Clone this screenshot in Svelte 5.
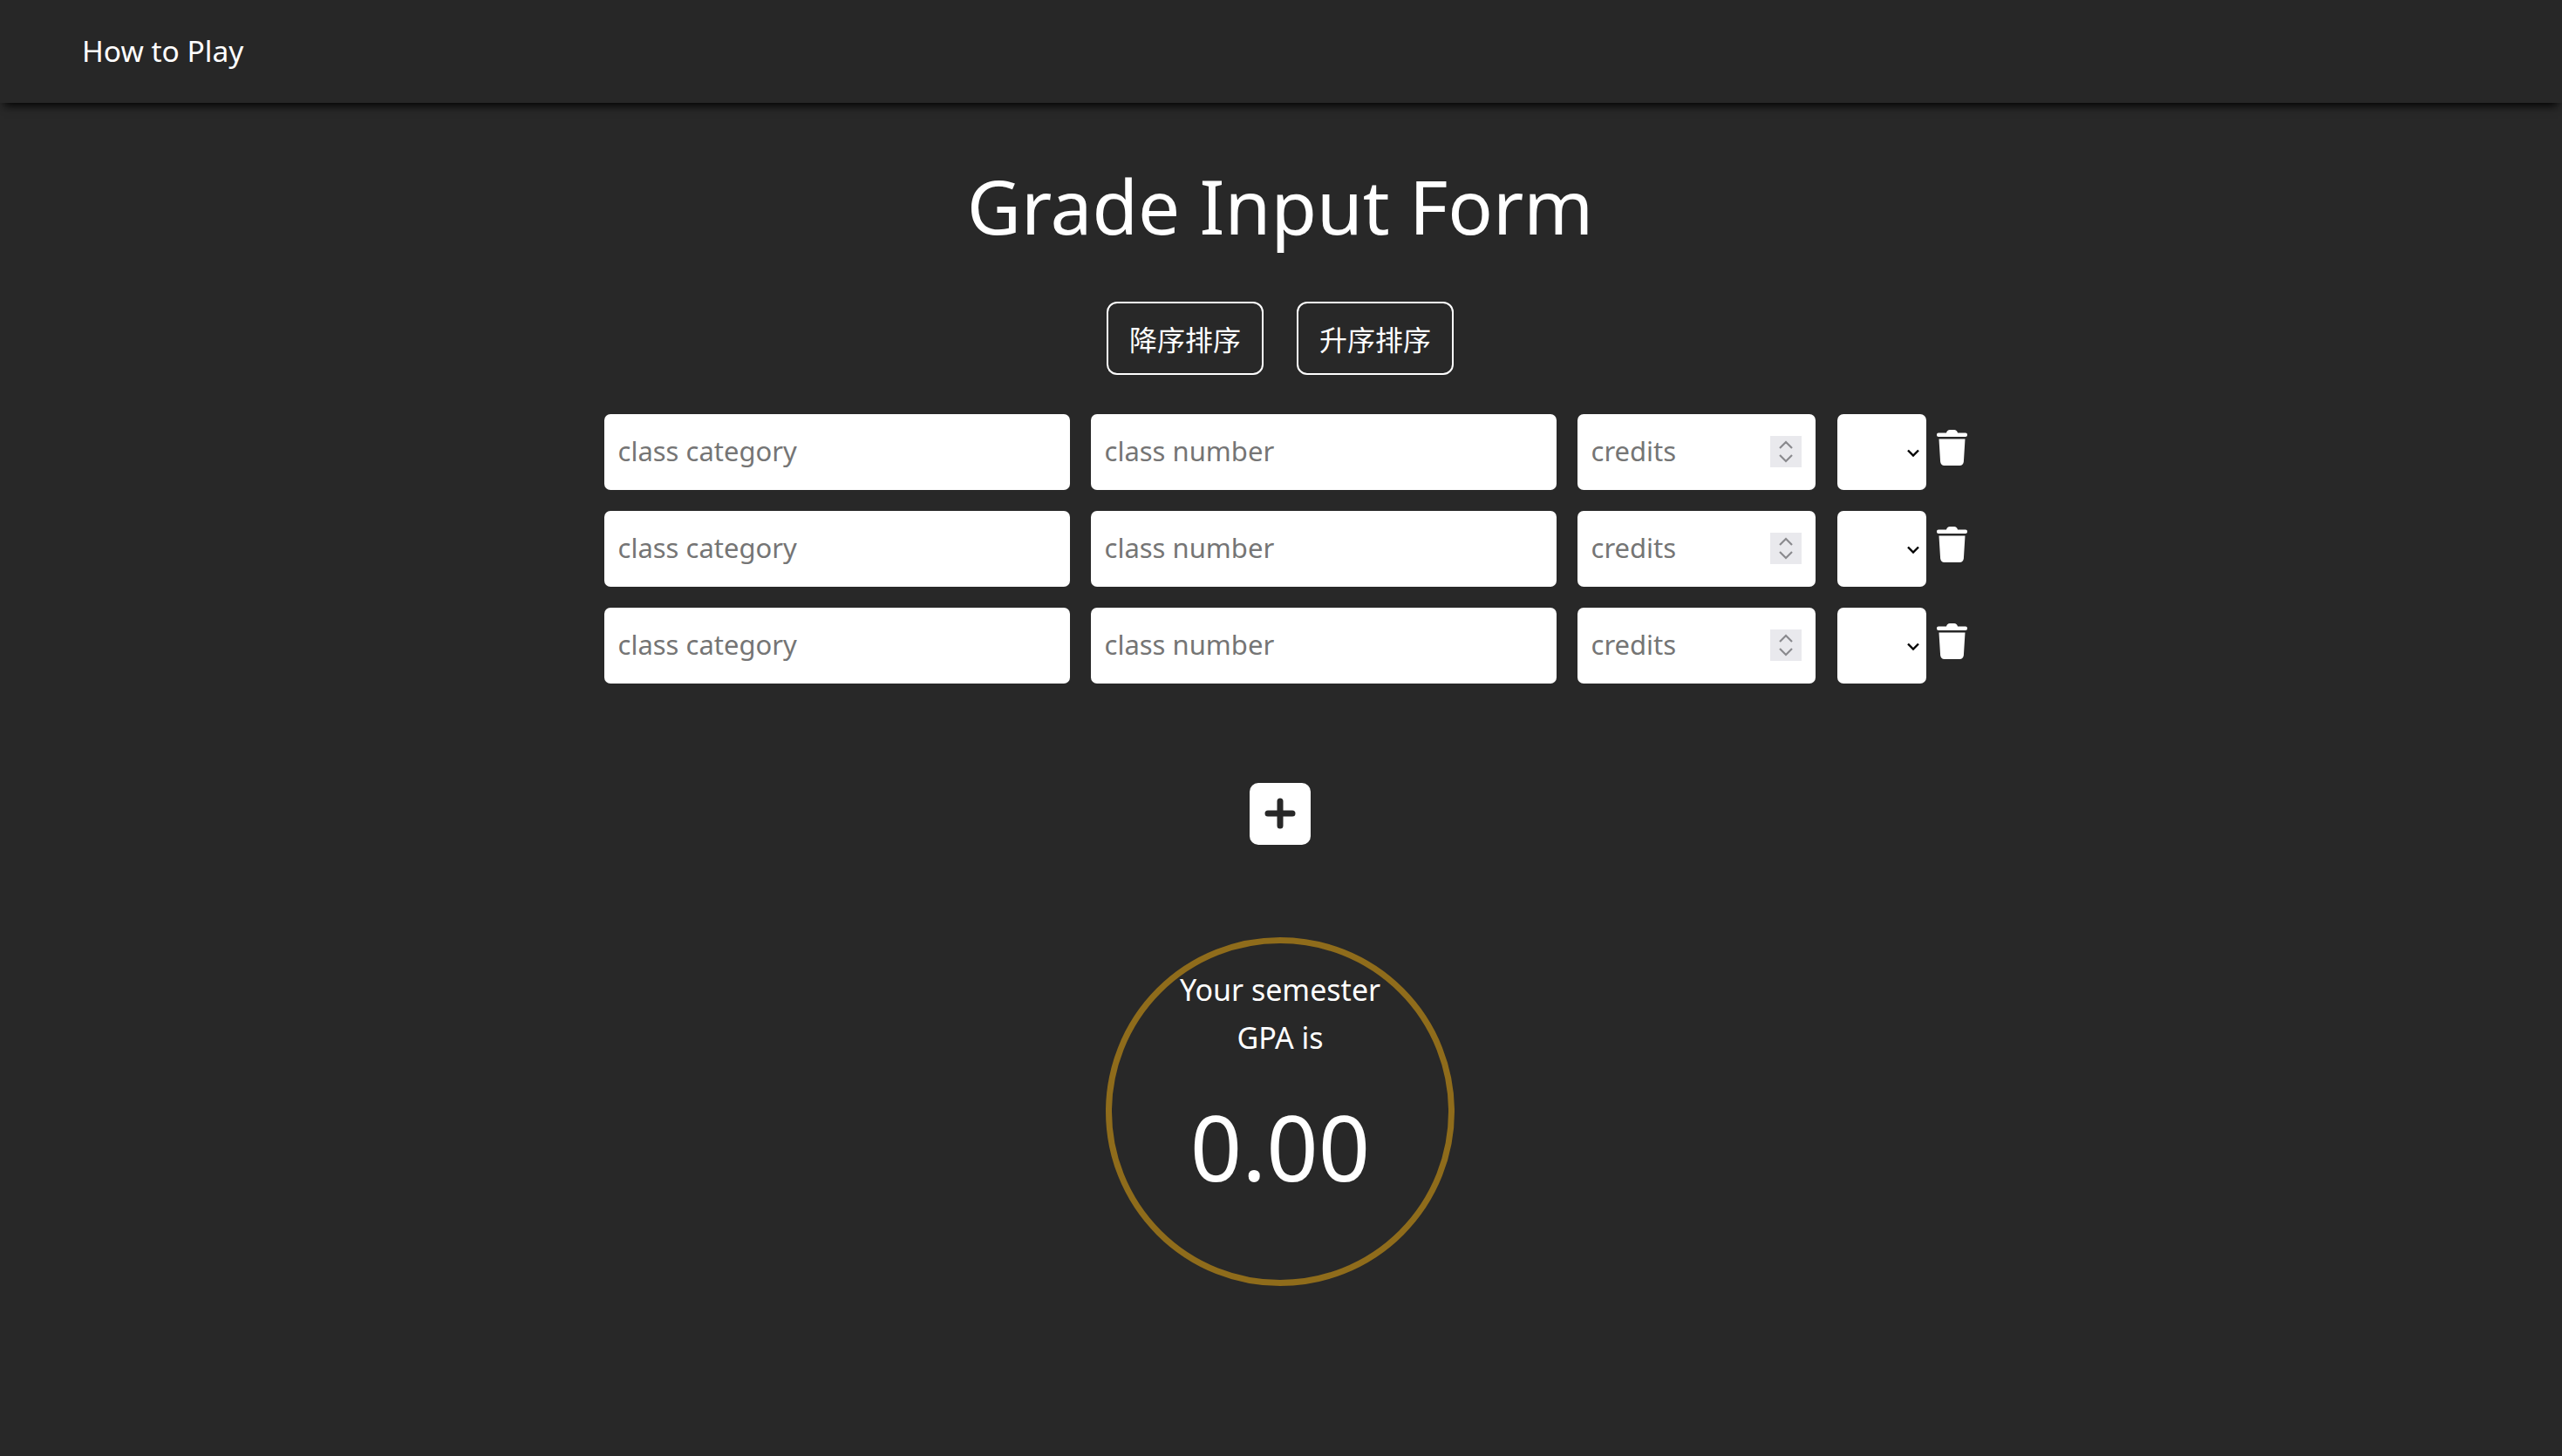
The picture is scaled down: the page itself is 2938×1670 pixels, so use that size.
<script lang="ts">
	const rows = [0, 1, 2];
</script>

<nav class="topbar">
	<a class="nav-link" href="#how">How to Play</a>
</nav>

<main class="page">
	<h1>Grade Input Form</h1>
	<div class="sort-btns">
		<button class="sort-btn">降序排序</button>
		<button class="sort-btn">升序排序</button>
	</div>

	<div class="rows">
		{#each rows as row (row)}
			<div class="row">
				<input class="field cat" placeholder="class category" />
				<input class="field num" placeholder="class number" />
				<div class="field credits">
					<span class="ph">credits</span>
					<span class="spinner">
						<svg viewBox="0 0 36 36" width="36" height="36">
							<path d="M11 14 18 7l7 7M11 22l7 7 7-7" fill="none" stroke="#8a8a8e" stroke-width="2.2" />
						</svg>
					</span>
				</div>
				<div class="field grade">
					<svg viewBox="0 0 14 9" width="14" height="9">
						<path d="M1 1.500 7 7.500l6-6" fill="none" stroke="#000" stroke-width="2.400" />
					</svg>
				</div>
				<button class="trash" aria-label="delete">
					<svg viewBox="0 0 35 41" width="35" height="41">
						<path fill="#fff" d="M11 3.500C11.500 1.500 13 0 15 0h5c2 0 3.500 1.500 4 3.500h9c1.200 0 2 .9 2 2.200s-.8 2.300-2 2.300H2C.8 8 0 7 0 5.700s.8-2.200 2-2.200zM2.500 10.500h30l-1.600 26c-.2 2.600-2 4.500-4.600 4.500H8.700c-2.600 0-4.400-1.900-4.600-4.500z" />
					</svg>
				</button>
			</div>
		{/each}
	</div>

	<button class="add" aria-label="add">
		<svg viewBox="0 0 36 36" width="36" height="36">
			<path d="M18 4v28M4 18h28" stroke="#282828" stroke-width="7" stroke-linecap="round" />
		</svg>
	</button>

	<div class="gpa">
		<p class="gpa-label">Your semester GPA is</p>
		<p class="gpa-value">0.00</p>
	</div>
</main>

<style>
	:global(body) {
		margin: 0;
		background: #282828;
		font-family: "Noto Sans", "Noto Sans CJK SC", sans-serif;
		color: #fff;
	}

	.topbar {
		box-sizing: border-box;
		height: 118px;
		display: flex;
		align-items: center;
		padding: 0 0 3px 94px;
		background: #272727;
		box-shadow: 0 8px 10px -5px #000;
	}

	.nav-link {
		color: #fff;
		font-size: 33.500px;
		text-decoration: none;
	}

	.page {
		display: flex;
		flex-direction: column;
		align-items: center;
		padding-right: 2px;
	}

	h1 {
		margin: 67px 0 0;
		font-size: 85.500px;
		font-weight: 400;
		line-height: 1.2;
	}

	.sort-btns {
		display: flex;
		gap: 38px;
		margin-top: 58px;
	}

	.sort-btn {
		width: 180px;
		height: 84px;
		background: transparent;
		border: 2px solid #fff;
		border-radius: 12px;
		color: #fff;
		font-family: "Noto Sans CJK SC", sans-serif;
		font-size: 32px;
	}

	.rows {
		display: flex;
		flex-direction: column;
		gap: 24px;
		margin-top: 45px;
	}

	.row {
		display: flex;
		align-items: flex-start;
		margin-left: 12px;
	}

	.field {
		box-sizing: border-box;
		height: 87px;
		background: #fff;
		border: none;
		border-radius: 7px;
		padding: 0 16px 3px;
		font-family: "Noto Sans", sans-serif;
		font-size: 31px;
		color: #222;
	}

	.field::placeholder,
	.ph {
		color: #757575;
	}

	.cat,
	.num {
		width: 534px;
		margin-right: 24px;
	}

	.credits {
		width: 273px;
		margin-right: 25px;
		display: flex;
		align-items: center;
		justify-content: space-between;
	}

	.spinner {
		width: 36px;
		height: 36px;
		background: #e9e9ed;
		display: flex;
		align-items: center;
		justify-content: center;
		margin-top: 3px;
	}

	.grade {
		width: 102px;
		display: flex;
		align-items: center;
		justify-content: flex-end;
		padding: 3px 8px 0 0;
	}

	.trash {
		background: none;
		border: none;
		padding: 0;
		margin: 18px 0 0 12px;
		line-height: 0;
	}

	.add {
		width: 70px;
		height: 71px;
		margin-top: 114px;
		background: #fff;
		border: none;
		border-radius: 10px;
		display: flex;
		align-items: center;
		justify-content: center;
		padding: 0;
	}

	.gpa {
		box-sizing: border-box;
		width: 400px;
		height: 400px;
		margin-top: 106px;
		border: 7px solid #8f6c1b;
		border-radius: 50%;
		text-align: center;
		padding: 26px 60px 0;
	}

	.gpa-label {
		margin: 0;
		font-size: 34px;
		line-height: 55px;
	}

	.gpa-value {
		margin: 35px 0 0;
		font-size: 104px;
		line-height: 1.2;
	}
</style>
